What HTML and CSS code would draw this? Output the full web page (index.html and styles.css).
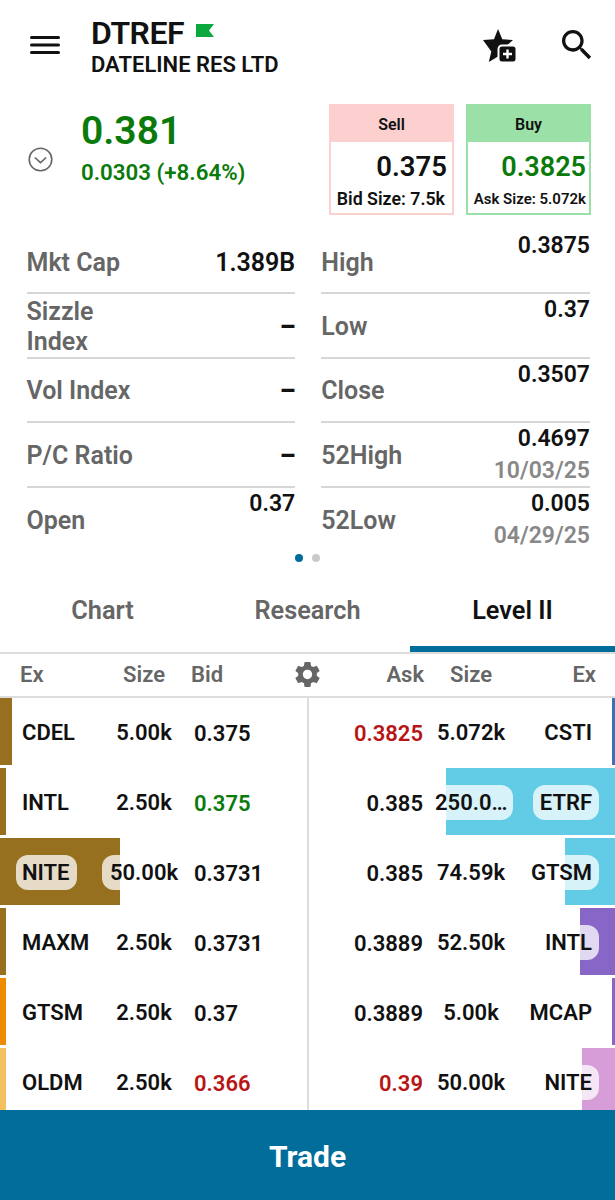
FILE: index.html
```html
<!DOCTYPE html>
<html lang="en">
<head>
    <meta charset="UTF-8">
    <meta name="viewport" content="width=device-width, initial-scale=1.0">
    <title>DTREF - Level II</title>
    <link rel="stylesheet" href="styles.css">
</head>
<body>
    <div class="app">
        <header class="top-bar">
            <svg class="menu-icon" viewBox="0 0 30 20" width="30" height="20">
                <path d="M1.5 2.5h27M1.5 10h27M1.5 17.5h27" stroke="#111" stroke-width="3" stroke-linecap="round" fill="none"/>
            </svg>
            <div class="title-block">
                <div class="symbol-line">
                    <span class="symbol">DTREF</span>
                    <svg class="flag" viewBox="0 0 18 13" width="18" height="13">
                        <path d="M0 0h18l-5 6.500 5 6.500H0z" fill="#0aa83f"/>
                    </svg>
                </div>
                <div class="company">DATELINE RES LTD</div>
            </div>
            <svg class="star-icon" viewBox="0 0 34 33" width="34" height="33">
                <path d="M15 0l4.300 10.200 10.700.9-8.100 7-1.900 5.900 1.900 7.500-6.900-3.900-9.200 5.400 2.500-10.500L0 11.100l11-.9z" fill="#111"/>
                <rect x="15.500" y="16.500" width="18" height="17" rx="3.500" fill="#111" stroke="#fff" stroke-width="2"/>
                <path d="M24.500 20.500v9M20 25h9" stroke="#fff" stroke-width="2.400" fill="none"/>
            </svg>
            <svg class="search-icon" viewBox="0 0 24 24" width="40" height="40">
                <path d="M15.500 14h-.79l-.28-.27C15.410 12.590 16 11.110 16 9.500 16 5.910 13.090 3 9.500 3S3 5.910 3 9.500 5.910 16 9.500 16c1.610 0 3.090-.59 4.230-1.570l.27.28v.79l5 4.990L20.490 19l-4.990-5zm-6 0C7.010 14 5 11.990 5 9.500S7.010 5 9.500 5 14 7.010 14 9.500 11.990 14 9.500 14z" fill="#111"/>
            </svg>
        </header>

        <section class="quote">
            <svg class="collapse-icon" viewBox="0 0 25 25" width="25" height="25">
                <circle cx="12.500" cy="12.500" r="11.300" stroke="#666" stroke-width="1.600" fill="none"/>
                <path d="M6.800 10.500l5.700 5.200 5.700-5.200" stroke="#666" stroke-width="1.600" fill="none"/>
            </svg>
            <div class="last-price">
                <div class="price">0.381</div>
                <div class="change">0.0303 (+8.64%)</div>
            </div>
            <div class="ticket sell">
                <div class="ticket-head">Sell</div>
                <div class="ticket-price">0.375</div>
                <div class="ticket-size">Bid Size: 7.5k</div>
            </div>
            <div class="ticket buy">
                <div class="ticket-head">Buy</div>
                <div class="ticket-price">0.3825</div>
                <div class="ticket-size">Ask Size: 5.072k</div>
            </div>
        </section>

        <section class="stats">
            <div class="stats-col">
                <div class="stat"><span class="stat-label">Mkt Cap</span><span class="stat-val big">1.389B</span></div>
                <div class="stat"><span class="stat-label">Sizzle Index</span><span class="stat-val dash">–</span></div>
                <div class="stat"><span class="stat-label">Vol Index</span><span class="stat-val dash">–</span></div>
                <div class="stat"><span class="stat-label">P/C Ratio</span><span class="stat-val dash">–</span></div>
                <div class="stat"><span class="stat-label">Open</span><span class="stat-val top">0.37</span></div>
            </div>
            <div class="stats-col">
                <div class="stat"><span class="stat-label">High</span><span class="stat-val top">0.3875</span></div>
                <div class="stat"><span class="stat-label">Low</span><span class="stat-val top">0.37</span></div>
                <div class="stat"><span class="stat-label">Close</span><span class="stat-val top">0.3507</span></div>
                <div class="stat"><span class="stat-label">52High</span><span class="stat-val top">0.4697<small>10/03/25</small></span></div>
                <div class="stat"><span class="stat-label">52Low</span><span class="stat-val top">0.005<small>04/29/25</small></span></div>
            </div>
        </section>

        <div class="pager">
            <span class="dot active"></span>
            <span class="dot"></span>
        </div>

        <nav class="tabs">
            <a class="tab">Chart</a>
            <a class="tab">Research</a>
            <a class="tab active">Level II</a>
        </nav>

        <div class="book-head">
            <div class="head-side">
                <span class="head-ex">Ex</span>
                <span class="head-size">Size</span>
                <span class="head-bid">Bid</span>
            </div>
            <svg class="gear" viewBox="0 0 24 24" width="31" height="31">
                <path d="M19.140 12.940c.04-.3.060-.61.060-.94 0-.32-.02-.64-.07-.94l2.030-1.580a.49.49 0 0 0 .12-.61l-1.920-3.320a.488.488 0 0 0-.59-.22l-2.390.96c-.5-.38-1.030-.7-1.620-.94l-.36-2.540a.484.484 0 0 0-.48-.41h-3.840c-.24 0-.43.170-.47.410l-.36 2.540c-.59.240-1.130.570-1.620.94l-2.390-.96c-.22-.08-.47 0-.59.220L2.740 8.870c-.12.210-.08.470.120.610l2.030 1.580c-.05.300-.09.630-.09.940s.02.640.070.940l-2.030 1.580a.49.49 0 0 0-.12.61l1.920 3.320c.12.220.37.290.59.220l2.390-.96c.5.380 1.030.7 1.620.94l.36 2.540c.05.240.24.410.48.410h3.840c.24 0 .44-.17.470-.41l.36-2.540c.59-.24 1.130-.56 1.620-.94l2.390.96c.22.080.47 0 .59-.22l1.920-3.320c.12-.22.070-.47-.12-.61l-2.010-1.580zM12 15.600A3.610 3.610 0 0 1 8.400 12c0-1.980 1.620-3.600 3.600-3.600s3.600 1.620 3.600 3.600-1.620 3.600-3.600 3.600z" fill="#666"/>
            </svg>
            <div class="head-side right">
                <span class="head-ask">Ask</span>
                <span class="head-size">Size</span>
                <span class="head-ex">Ex</span>
            </div>
        </div>

        <div class="book">
            <div class="book-side bids">
                <div class="row">
                    <div class="depth" style="width: 12px; background: #97701f"></div>
                    <div class="ex"><span class="pill">CDEL</span></div>
                    <div class="size"><span class="pill">5.00k</span></div>
                    <div class="px">0.375</div>
                </div>
                <div class="row">
                    <div class="depth" style="width: 6px; background: #97701f"></div>
                    <div class="ex"><span class="pill">INTL</span></div>
                    <div class="size"><span class="pill">2.50k</span></div>
                    <div class="px up">0.375</div>
                </div>
                <div class="row">
                    <div class="depth" style="width: 120px; background: #97701f"></div>
                    <div class="ex"><span class="pill">NITE</span></div>
                    <div class="size"><span class="pill">50.00k</span></div>
                    <div class="px">0.3731</div>
                </div>
                <div class="row">
                    <div class="depth" style="width: 6px; background: #97701f"></div>
                    <div class="ex"><span class="pill">MAXM</span></div>
                    <div class="size"><span class="pill">2.50k</span></div>
                    <div class="px">0.3731</div>
                </div>
                <div class="row">
                    <div class="depth" style="width: 6px; background: #ee8c00"></div>
                    <div class="ex"><span class="pill">GTSM</span></div>
                    <div class="size"><span class="pill">2.50k</span></div>
                    <div class="px">0.37</div>
                </div>
                <div class="row">
                    <div class="depth" style="width: 6px; background: #f5c15f"></div>
                    <div class="ex"><span class="pill">OLDM</span></div>
                    <div class="size"><span class="pill">2.50k</span></div>
                    <div class="px down">0.366</div>
                </div>
            </div>
            <div class="book-side asks">
                <div class="row">
                    <div class="depth" style="width: 3px; background: #3a70b4"></div>
                    <div class="px down">0.3825</div>
                    <div class="size"><span class="pill">5.072k</span></div>
                    <div class="ex"><span class="pill">CSTI</span></div>
                </div>
                <div class="row">
                    <div class="depth" style="width: 169px; background: #62cbe6"></div>
                    <div class="px">0.385</div>
                    <div class="size"><span class="pill">250.0…</span></div>
                    <div class="ex"><span class="pill">ETRF</span></div>
                </div>
                <div class="row">
                    <div class="depth" style="width: 50px; background: #62cbe6"></div>
                    <div class="px">0.385</div>
                    <div class="size"><span class="pill">74.59k</span></div>
                    <div class="ex"><span class="pill">GTSM</span></div>
                </div>
                <div class="row">
                    <div class="depth" style="width: 35px; background: #8866c7"></div>
                    <div class="px">0.3889</div>
                    <div class="size"><span class="pill">52.50k</span></div>
                    <div class="ex"><span class="pill">INTL</span></div>
                </div>
                <div class="row">
                    <div class="depth" style="width: 3px; background: #8866c7"></div>
                    <div class="px">0.3889</div>
                    <div class="size"><span class="pill">5.00k</span></div>
                    <div class="ex"><span class="pill">MCAP</span></div>
                </div>
                <div class="row">
                    <div class="depth" style="width: 33px; background: #d69dd8"></div>
                    <div class="px down">0.39</div>
                    <div class="size"><span class="pill">50.00k</span></div>
                    <div class="ex"><span class="pill">NITE</span></div>
                </div>
            </div>
        </div>

        <button class="trade-button">Trade</button>
    </div>
</body>
</html>
```

FILE: styles.css
```css
body {
    font-family: Roboto, "Liberation Sans", sans-serif;
    font-weight: 600;
    margin: 0;
    padding: 0;
    color: #111;
    background-color: #fff;
}

.app {
    width: 615px;
    height: 1200px;
    display: flex;
    flex-direction: column;
    overflow: hidden;
}

/* top bar */
.top-bar {
    height: 100px;
    flex: none;
    display: flex;
    align-items: center;
    box-sizing: border-box;
    padding: 0 18px 10px 30px;
}

.menu-icon {
    flex: none;
}

.title-block {
    flex: 1;
    margin-left: 31px;
    padding-top: 5px;
}

.symbol-line {
    display: flex;
    align-items: center;
    height: 34px;
}

.symbol {
    font-size: 32px;
    letter-spacing: -0.5px;
}

.flag {
    margin-left: 12px;
    margin-top: -5px;
}

.company {
    font-size: 22px;
    line-height: 30px;
}

.star-icon {
    margin-right: 40px;
}

/* quote */
.quote {
    height: 115px;
    flex: none;
    display: flex;
    align-items: flex-start;
    box-sizing: border-box;
    padding-left: 28px;
    padding-top: 4px;
}

.collapse-icon {
    flex: none;
    margin-top: 43px;
}

.last-price {
    width: 248px;
    margin-left: 28px;
    padding-top: 4px;
}

.price {
    font-size: 39px;
    line-height: 46px;
    color: #0a7a0a;
}

.change {
    font-size: 22.300px;
    line-height: 36px;
    color: #0a7a0a;
}

.ticket {
    width: 125px;
    height: 111px;
    box-sizing: border-box;
    border: 2px solid;
    text-align: right;
    margin-right: 12px;
}

.sell {
    border-color: #fbd0cf;
}

.buy {
    border-color: #9be0a7;
}

.ticket-head {
    height: 36px;
    margin: -2px -2px 0;
    padding-top: 2px;
    font-size: 16px;
    line-height: 38px;
    text-align: center;
}

.sell .ticket-head {
    background-color: #fbd0cf;
}

.buy .ticket-head {
    background-color: #9be0a7;
}

.ticket-price {
    font-size: 27.500px;
    line-height: 42px;
    padding: 4px 5px 0 0;
}

.buy .ticket-price {
    color: #0a7a0a;
    font-size: 27px;
    padding-right: 3px;
}

.ticket-size {
    font-size: 17.800px;
    line-height: 22px;
    padding-right: 7px;
}

.buy .ticket-size {
    font-size: 15px;
    padding-right: 3px;
}

/* stats grid */
.stats {
    flex: none;
    display: flex;
    gap: 26px;
    padding: 15px 25px 0 26.500px;
}

.stats-col {
    flex: 1;
}

.stat {
    height: 64.400px;
    box-sizing: border-box;
    border-bottom: 2px solid #d6d6d6;
    display: flex;
    justify-content: space-between;
    align-items: center;
}

.stat:last-child {
    border-bottom: none;
}

.stat-label {
    font-size: 25px;
    line-height: 30px;
    color: #666;
    max-width: 120px;
    padding-top: 3px;
}

.stat-val {
    font-size: 23px;
    line-height: 30px;
    text-align: right;
}

.stat-val.big {
    font-size: 25px;
    padding-top: 3px;
}

.stat-val.dash {
    font-size: 25px;
    font-weight: 900;
    padding-top: 3px;
}

.stat-val.top {
    align-self: flex-start;
    padding-top: 1px;
}

.stat-val small {
    display: block;
    font-size: 23px;
    font-weight: 600;
    line-height: 34px;
    color: #888;
}

.pager {
    flex: none;
    display: flex;
    justify-content: center;
    gap: 9px;
    padding-top: 2px;
    height: 21px;
    box-sizing: border-box;
}

.dot {
    width: 8px;
    height: 8px;
    border-radius: 50%;
    background-color: #c9c9c9;
}

.dot.active {
    background-color: #006d9b;
}

/* tabs */
.tabs {
    flex: none;
    display: flex;
    height: 78px;
    margin-top: 3px;
    border-bottom: 2px solid #ddd;
    box-sizing: border-box;
}

.tab {
    flex: 1;
    text-align: center;
    font-size: 25.300px;
    line-height: 70px;
    color: #666;
}

.tab.active {
    color: #111;
    border-bottom: 6px solid #006d9b;
}

/* order book */
.book-head {
    flex: none;
    height: 44px;
    box-sizing: border-box;
    border-bottom: 2px solid #ddd;
    display: flex;
    align-items: center;
    font-size: 22px;
    color: #666;
}

.head-side {
    flex: 1;
    display: flex;
    align-items: center;
}

.head-ex {
    width: 102px;
    box-sizing: border-box;
    padding-left: 20px;
}

.head-side .head-size {
    width: 84px;
    text-align: center;
}

.head-bid {
    padding-left: 5px;
}

.head-side.right {
    justify-content: flex-end;
}

.head-side.right .head-ex {
    text-align: right;
    padding: 0 19px 0 0;
}

.head-ask {
    padding-right: 5px;
}

.book {
    flex: 1;
    min-height: 0;
    display: flex;
    overflow: hidden;
}

.book-side {
    flex: 1;
}

.bids {
    border-right: 2px solid #ddd;
}

.row {
    position: relative;
    height: 67px;
    margin-bottom: 3px;
    display: flex;
    align-items: center;
    font-size: 22px;
}

.depth {
    position: absolute;
    top: 0;
    bottom: 0;
    left: 0;
}

.asks .depth {
    left: auto;
    right: 0;
}

.ex,
.size,
.px {
    position: relative;
    top: 1px;
}

.px {
    top: 2px;
}

.ex {
    width: 86px;
    flex: none;
}

.bids .ex {
    margin-left: 16px;
}

.bids .ex .pill {
    padding-left: 6px;
}

.asks .ex {
    margin-right: 16px;
    text-align: right;
}

.size {
    width: 84px;
    flex: none;
    text-align: center;
}

.size .pill {
    display: block;
    padding: 1px 6px 0;
    white-space: nowrap;
}

.pill {
    display: inline-block;
    padding: 1px 7px 0;
    line-height: 34px;
    border-radius: 12px;
    background-color: rgba(255, 255, 255, 0.75);
}

.px {
    flex: 1;
    padding-left: 8px;
}

.asks .px {
    padding: 0 6px 0 0;
    text-align: right;
}

.up {
    color: #0a7a0a;
}

.down {
    color: #b81414;
}

.trade-button {
    flex: none;
    height: 90px;
    border: none;
    padding: 2px 0 0;
    background-color: #006d9b;
    color: white;
    font-family: inherit;
    font-size: 30px;
    font-weight: 700;
}
```
